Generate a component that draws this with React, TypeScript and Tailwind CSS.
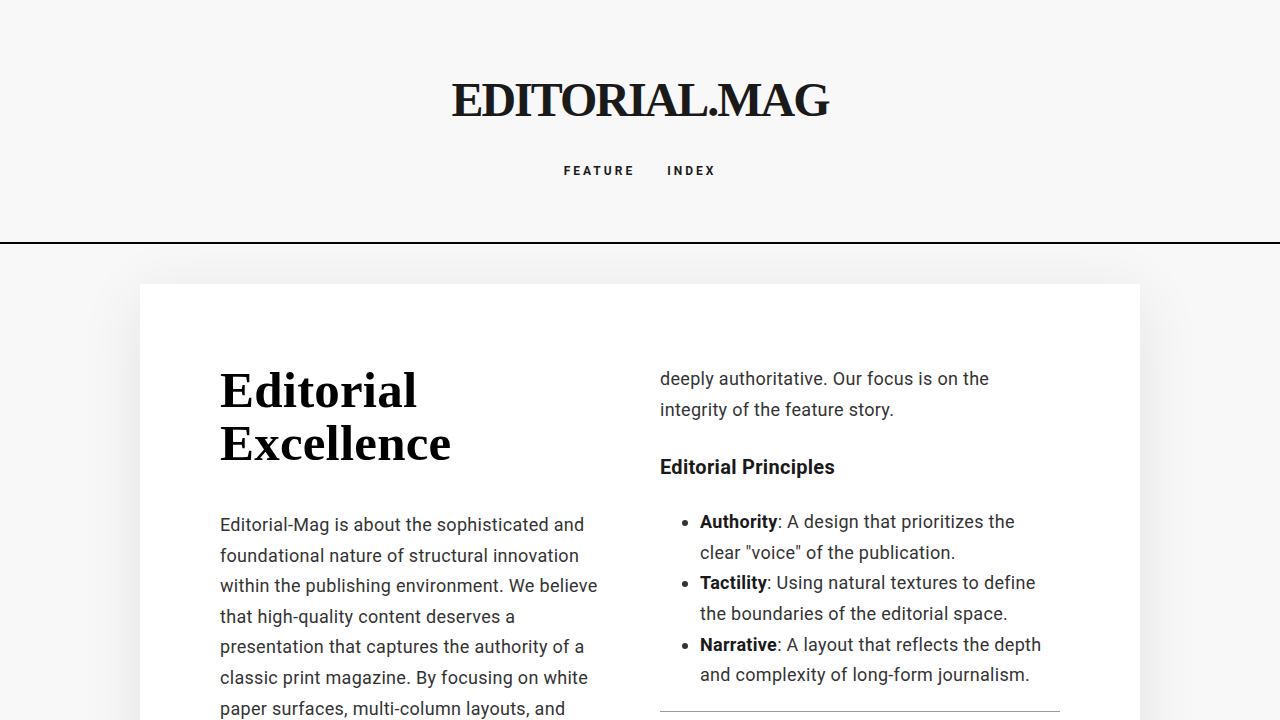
import React from 'react'

const serif = "font-['Liberation_Serif','DejaVu_Serif',serif]"
const sans = "font-['Roboto','Noto_Sans',sans-serif]"

const principles = [
  { name: 'Authority', text: 'A design that prioritizes the clear "voice" of the publication.' },
  { name: 'Tactility', text: 'Using natural textures to define the boundaries of the editorial space.' },
  { name: 'Narrative', text: 'A layout that reflects the depth and complexity of long-form journalism.' },
]

export default function App() {
  return (
    <div className={`min-h-screen bg-[#f8f8f8] text-[#1a1a1a] ${sans}`}>
      <header className="border-b-2 border-black pt-[71px] pb-[61px] text-center">
        <h1 className={`${serif} text-[48px] font-bold leading-[58px] tracking-[-2px] text-[#1a1a1a]`}>
          EDITORIAL.MAG
        </h1>
        <nav className="mt-[32px] flex justify-center gap-[32px] text-[12px] font-bold uppercase leading-5 tracking-[0.25em]">
          <a href="#">Feature</a>
          <a href="#">Index</a>
        </nav>
      </header>

      <main className="px-[140px] pt-10 pb-20">
        <article className="bg-white px-20 py-20 shadow-[0_12px_60px_rgba(0,0,0,0.09)]">
          <div className="grid grid-cols-2 gap-10 text-[18px] leading-[1.7] tracking-[0.3px] text-[#333]">
            <div>
              <h2 className={`${serif} mb-10 text-[51px] font-bold leading-[53px] tracking-[0.2px] text-black`}>
                Editorial
                <br />
                Excellence
              </h2>
              <p>
                Editorial-Mag is about the sophisticated and foundational nature of structural innovation
                within the publishing environment. We believe that high-quality content deserves a
                presentation that captures the authority of a classic print magazine. By focusing on white
                paper surfaces, multi-column layouts, and refined serif typography, we create an experience
                that feels timeless, considered and
              </p>
            </div>
            <div>
              <p>deeply authoritative. Our focus is on the integrity of the feature story.</p>
              <h3 className="mt-[29px] text-[20px] font-bold leading-[26px] text-[#1a1a1a]">
                Editorial Principles
              </h3>
              <ul className="mt-[27px] list-disc pl-10">
                {principles.map((p) => (
                  <li key={p.name}>
                    <strong className="font-bold text-[#1a1a1a]">{p.name}</strong>: {p.text}
                  </li>
                ))}
              </ul>
              <hr className="mt-5 border-t border-[#999]" />
              <p className="mt-5">
                Every page is treated as a composed surface, where rhythm, hierarchy and whitespace carry
                the reader from one idea to the next.
              </p>
            </div>
          </div>
        </article>
      </main>
    </div>
  )
}
